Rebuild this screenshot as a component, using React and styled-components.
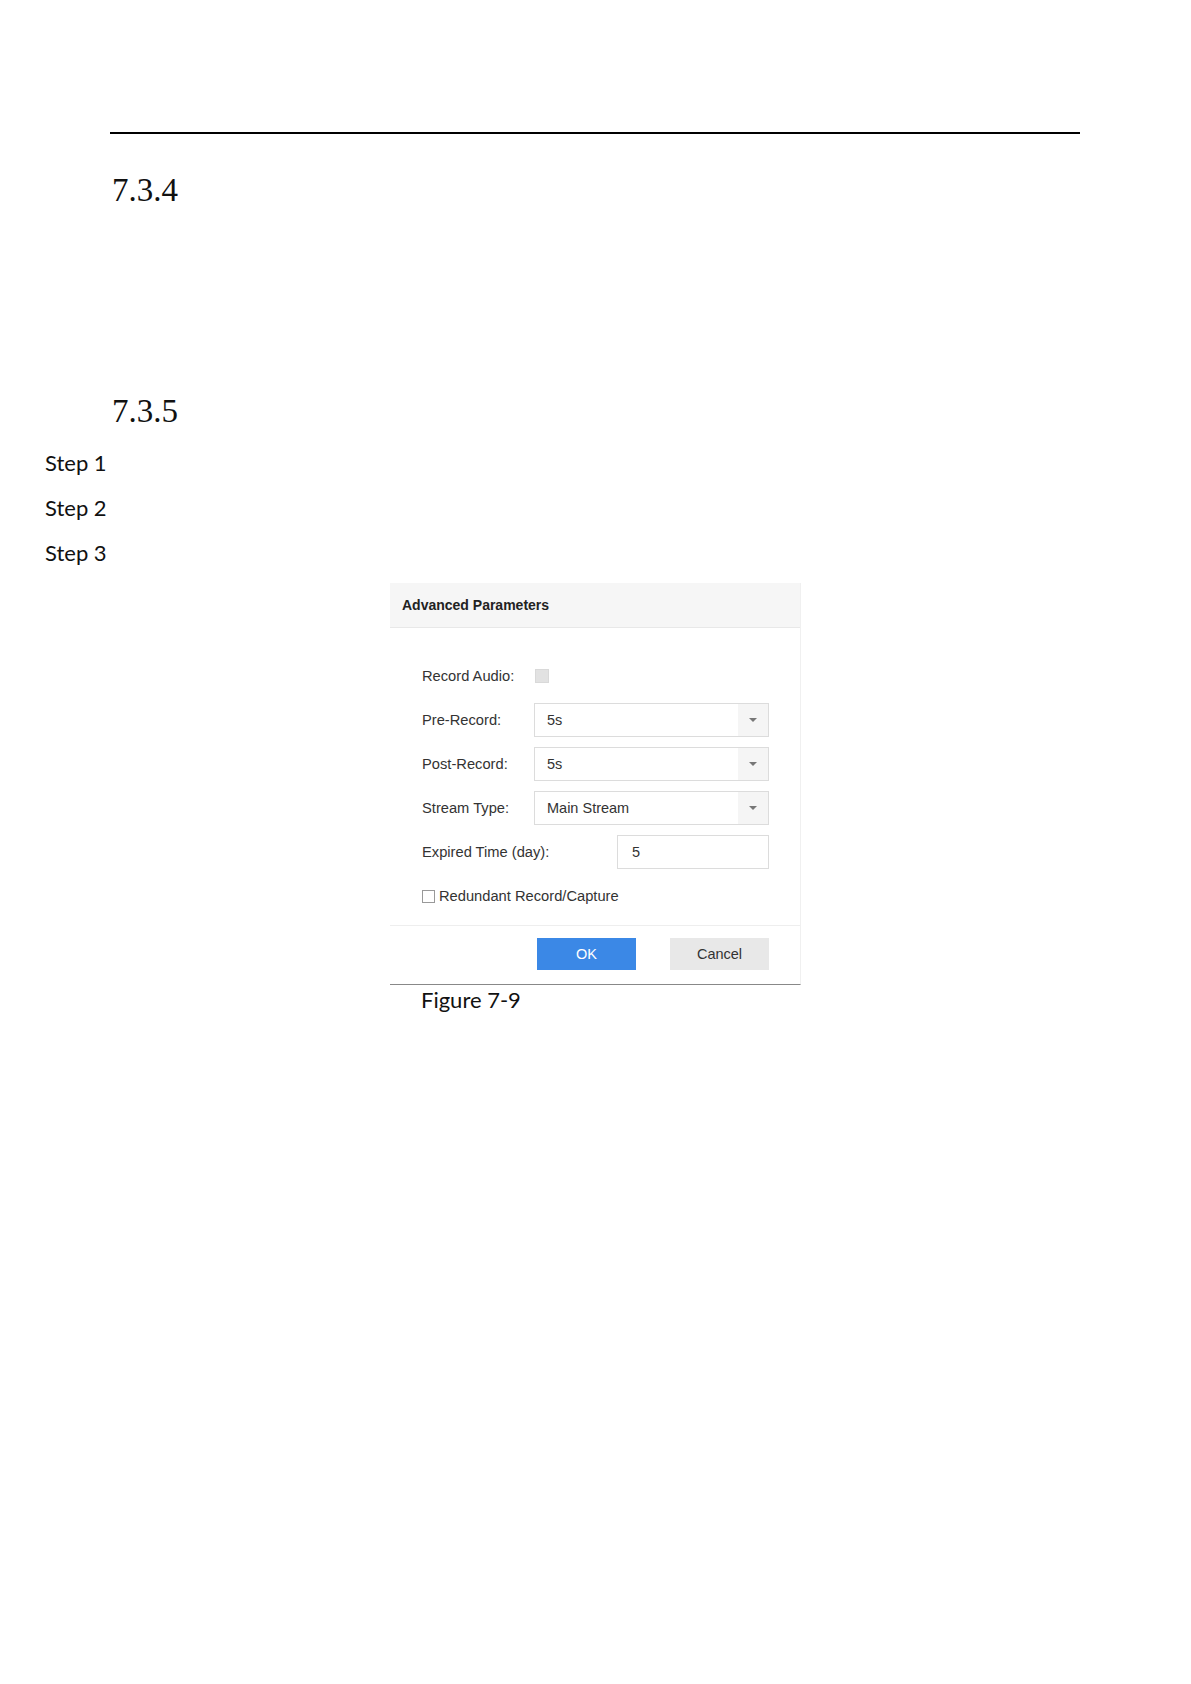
import React from 'react';
import styled, {createGlobalStyle} from "styled-components";

const GlobalStyle = createGlobalStyle`
  body {
    margin: 0;
    background: #fff;
  }
  * {
    box-sizing: border-box;
  }
`

const Page = styled.div`
  width: 1191px;
  min-height: 1684px;
  padding-top: 132px;
  background: #fff;
`

const Rule = styled.div`
  margin-left: 110px;
  width: 970px;
  height: 2px;
  background: #000;
`

const SectionTitle = styled.h2`
  margin: ${props => props.top}px 0 0 112px;
  font-family: "Liberation Serif", serif;
  font-weight: 400;
  font-size: 33px;
  line-height: 40px;
  color: #111;
`

const Steps = styled.div`
  margin-top: 9px;
  padding-left: 45px;
`

const Step = styled.div`
  font-family: Lato, "Noto Sans", sans-serif;
  font-size: 22px;
  line-height: 45px;
  color: #111;
`

const Dialog = styled.div`
  margin: 8px 0 0 390px;
  width: 411px;
  background: #fff;
  border-right: 1px solid #f0f0f0;
  border-bottom: 1px solid #888;
  font-family: "Liberation Sans", Arial, sans-serif;
  color: #333;
`

const Header = styled.div`
  height: 45px;
  padding-left: 12px;
  line-height: 44px;
  background: #f6f6f6;
  border-bottom: 1px solid #e8e8e8;
  font-size: 14px;
  font-weight: bold;
  color: #222;
`

const Body = styled.div`
  display: flex;
  flex-direction: column;
  gap: 10px;
  padding: 31px 0 12px 32px;
`

const Row = styled.div`
  display: flex;
  align-items: center;
  height: 34px;
  width: 347px;
`

const Label = styled.span`
  flex: 0 0 ${props => props.width}px;
  font-size: 14.7px;
  color: #333;
`

const GrayBox = styled.span`
  width: 14px;
  height: 14px;
  margin-left: 1px;
  background: #e2e2e2;
  border: 1px solid #d9d9d9;
`

const Select = styled.div`
  flex: 1;
  display: flex;
  height: 34px;
  border: 1px solid #dcdcdc;
  background: #fff;
`

const SelectValue = styled.span`
  flex: 1;
  padding-left: 12px;
  font-size: 14.5px;
  line-height: 32px;
  color: #333;
`

const SelectArrow = styled.span`
  width: 30px;
  display: flex;
  align-items: center;
  justify-content: center;
  background: #f5f5f5;
`

const Input = styled.div`
  flex: 1;
  height: 34px;
  padding-left: 14px;
  border: 1px solid #dcdcdc;
  font-size: 14.5px;
  line-height: 32px;
  color: #333;
`

const CheckLine = styled.label`
  display: flex;
  align-items: center;
  gap: 4px;
  font-size: 14.7px;
  color: #333;
`

const CheckBox = styled.span`
  width: 13px;
  height: 13px;
  border: 1px solid #999;
  background: #fff;
`

const Footer = styled.div`
  display: flex;
  justify-content: flex-end;
  gap: 34px;
  padding: 12px 31px 14px 0;
  border-top: 1px solid #eee;
`

const Button = styled.button`
  width: 99px;
  height: 32px;
  border: none;
  border-radius: 0;
  padding: 0;
  font-family: "Liberation Sans", Arial, sans-serif;
  font-size: 14.5px;
  background: ${props => props.primary ? "#3b88e6" : "#e8e8e8"};
  color: ${props => props.primary ? "#fff" : "#333"};
`

const Caption = styled.div`
  margin: 2px 0 0 421px;
  font-family: Lato, "Noto Sans", sans-serif;
  font-size: 22px;
  line-height: 26px;
  color: #111;
`

const Caret = () => (
    <svg width="8" height="5" viewBox="0 0 8 5">
        <polygon points="0,0 8,0 4,4" fill="#777"/>
    </svg>
)

const SelectField = ({label, value}) => (
    <Row>
        <Label width={112}>{label}</Label>
        <Select>
            <SelectValue>{value}</SelectValue>
            <SelectArrow><Caret/></SelectArrow>
        </Select>
    </Row>
)

const App = () => {
    return (
        <Page>
            <GlobalStyle/>
            <Rule/>
            <SectionTitle top={36}>7.3.4</SectionTitle>
            <SectionTitle top={181}>7.3.5</SectionTitle>
            <Steps>
                <Step>Step 1</Step>
                <Step>Step 2</Step>
                <Step>Step 3</Step>
            </Steps>
            <Dialog>
                <Header>Advanced Parameters</Header>
                <Body>
                    <Row>
                        <Label width={112}>Record Audio:</Label>
                        <GrayBox/>
                    </Row>
                    <SelectField label="Pre-Record:" value="5s"/>
                    <SelectField label="Post-Record:" value="5s"/>
                    <SelectField label="Stream Type:" value="Main Stream"/>
                    <Row>
                        <Label width={195}>Expired Time (day):</Label>
                        <Input>5</Input>
                    </Row>
                    <Row>
                        <CheckLine>
                            <CheckBox/>
                            Redundant Record/Capture
                        </CheckLine>
                    </Row>
                </Body>
                <Footer>
                    <Button primary>OK</Button>
                    <Button>Cancel</Button>
                </Footer>
            </Dialog>
            <Caption>Figure 7-9</Caption>
        </Page>
    );
}

export default App;
